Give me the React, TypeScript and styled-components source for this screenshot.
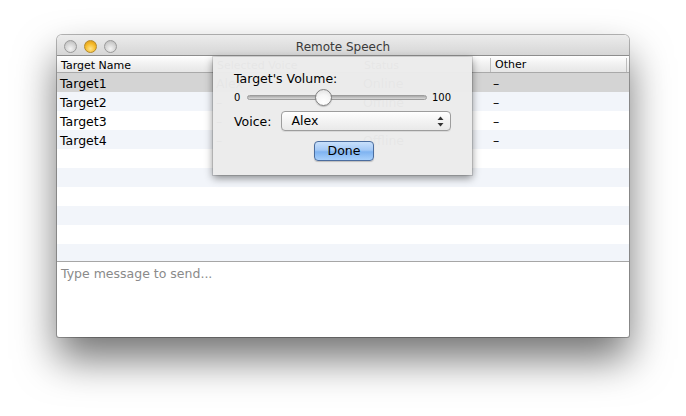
import React from "react";
import styled, { createGlobalStyle } from "styled-components";

const Global = createGlobalStyle`
  html, body { margin: 0; padding: 0; background: #ffffff; }
  body { font-family: "DejaVu Sans", "Liberation Sans", sans-serif; color: #000; }
  * { box-sizing: border-box; }
`;

const Page = styled.div`
  width: 686px;
  height: 416px;
  padding: 35px 0 0 57px;
  overflow: hidden;
`;

const Window = styled.div`
  position: relative;
  width: 572px;
  height: 302px;
  display: flex;
  flex-direction: column;
  border-radius: 5px 5px 2px 2px;
  background: #fff;
  box-shadow: 0 0 0 1px rgba(0, 0, 0, 0.28), 0 22px 40px rgba(0, 0, 0, 0.55);
`;

const TitleBar = styled.div`
  height: 21px;
  flex: none;
  position: relative;
  display: flex;
  align-items: center;
  justify-content: center;
  padding-top: 3px;
  border-radius: 5px 5px 0 0;
  background: linear-gradient(#ececec, #d6d6d6);
  border-bottom: 1px solid #8d8d8d;
  font-size: 12px;
  color: #3a3a3a;
`;

const Lights = styled.div`
  position: absolute;
  left: 7px;
  top: 5px;
  display: flex;
  gap: 7px;
`;

const Light = styled.div<{ $c?: "yellow" }>`
  width: 13px;
  height: 13px;
  border-radius: 50%;
  border: 1px solid ${(p) => (p.$c ? "#b48a2a" : "#9a9a9a")};
  background: ${(p) =>
    p.$c
      ? "radial-gradient(circle at 50% 70%, #ffe48a 0%, #f5b928 55%, #d4901a 100%)"
      : "radial-gradient(circle at 50% 70%, #f4f4f4 0%, #d0d0d0 60%, #b4b4b4 100%)"};
`;

const Table = styled.div`
  flex: 1;
  display: flex;
  flex-direction: column;
  overflow: hidden;
`;

const cols = "156px 147px 130px 136px 3px";

const Header = styled.div`
  height: 17px;
  flex: none;
  display: grid;
  grid-template-columns: ${cols};
  background: linear-gradient(#ffffff, #f1f1f1 50%, #e6e6e6);
  border-bottom: 1px solid #a9a9a9;
  font-size: 11px;
`;

const HeadCell = styled.div<{ $sep?: boolean }>`
  padding-left: 4px;
  white-space: nowrap;
  border-left: ${(p) => (p.$sep ? "1px solid #bdbdbd" : "none")};
  margin: ${(p) => (p.$sep ? "2px 0" : "0")};
  padding-top: ${(p) => (p.$sep ? "0" : "2px")};
  line-height: ${(p) => (p.$sep ? "14px" : "15px")};
`;

const Row = styled.div<{ $bg: string }>`
  height: 19px;
  flex: none;
  display: grid;
  grid-template-columns: ${cols};
  background: ${(p) => p.$bg};
  font-size: 12.5px;
  line-height: 19px;
  padding-top: 1px;
`;

const Cell = styled.div`
  padding-left: 3px;
  white-space: nowrap;
`;

const Message = styled.div`
  height: 76px;
  flex: none;
  border-top: 1px solid #a6a6a6;
  padding: 4px 4px;
  font-size: 12.5px;
  color: #8a8a8a;
  border-radius: 0 0 2px 2px;
`;

const Popover = styled.div`
  position: absolute;
  left: 156px;
  top: 22px;
  width: 259px;
  height: 118px;
  background: rgba(236, 236, 236, 0.975);
  box-shadow: 0 0 0 1px rgba(0, 0, 0, 0.12), 0 3px 8px rgba(0, 0, 0, 0.45);
  padding: 14px 21px 0 21px;
  display: flex;
  flex-direction: column;
  font-size: 12.5px;
`;

const Label = styled.div`
  height: 16px;
  line-height: 16px;
`;

const SliderRow = styled.div`
  margin-top: 1px;
  height: 18px;
  display: flex;
  align-items: center;
  font-size: 10px;
  gap: 5px;
`;

const Track = styled.div`
  position: relative;
  width: 181px;
  height: 5px;
  border-radius: 3px;
  border: 1px solid #9c9c9c;
  background: linear-gradient(#a8a8a8, #dadada);
  margin-left: 2px;
`;

const Knob = styled.div`
  position: absolute;
  left: 67px;
  top: -7px;
  width: 17px;
  height: 17px;
  border-radius: 50%;
  border: 1px solid #808080;
  background: radial-gradient(circle at 50% 80%, #ffffff 0%, #f6f6f6 50%, #dcdcdc 100%);
  box-shadow: 0 1px 1px rgba(0, 0, 0, 0.2);
`;

const VoiceRow = styled.div`
  margin-top: 5px;
  height: 20px;
  display: flex;
  align-items: center;
  gap: 10px;
`;

const Popup = styled.div`
  position: relative;
  width: 170px;
  height: 20px;
  border: 1px solid #9d9d9d;
  border-radius: 4px;
  background: linear-gradient(#ffffff, #f3f3f3 50%, #e9e9e9);
  box-shadow: 0 1px 0 rgba(0, 0, 0, 0.08);
  padding-left: 9px;
  line-height: 18px;
`;

const Arrows = styled.svg`
  position: absolute;
  right: 6px;
  top: 4px;
`;

const DoneRow = styled.div`
  margin-top: 10px;
  display: flex;
  justify-content: center;
`;

const Done = styled.div`
  width: 60px;
  height: 20px;
  margin-left: 3px;
  border: 1px solid #4b6d9e;
  border-radius: 4px;
  text-align: center;
  line-height: 18px;
  background: linear-gradient(#c9e0fb 0%, #a4c9f6 45%, #7fb3f1 55%, #a8d0fb 100%);
  box-shadow: 0 1px 1px rgba(0, 0, 0, 0.2);
`;

const rows = [
  { bg: "#d4d4d4", c: ["Target1", "Alex", "Online", "–"] },
  { bg: "#f2f5fa", c: ["Target2", "–", "Offline", "–"] },
  { bg: "#ffffff", c: ["Target3", "–", "Offline", "–"] },
  { bg: "#f2f5fa", c: ["Target4", "–", "Offline", "–"] },
  { bg: "#ffffff", c: ["", "", "", ""] },
  { bg: "#f2f5fa", c: ["", "", "", ""] },
  { bg: "#ffffff", c: ["", "", "", ""] },
  { bg: "#f2f5fa", c: ["", "", "", ""] },
  { bg: "#ffffff", c: ["", "", "", ""] },
  { bg: "#f2f5fa", c: ["", "", "", ""] },
];

export default function App() {
  return (
    <Page>
      <Global />
      <Window>
        <TitleBar>
          <Lights>
            <Light />
            <Light $c="yellow" />
            <Light />
          </Lights>
          Remote Speech
        </TitleBar>
        <Table>
          <Header>
            <HeadCell>Target Name</HeadCell>
            <HeadCell>Selected Voice</HeadCell>
            <HeadCell>Status</HeadCell>
            <HeadCell $sep>Other</HeadCell>
            <HeadCell $sep />
          </Header>
          {rows.map((r, i) => (
            <Row key={i} $bg={r.bg}>
              {r.c.map((t, j) => (
                <Cell key={j}>{t}</Cell>
              ))}
              <Cell />
            </Row>
          ))}
        </Table>
        <Message>Type message to send...</Message>
        <Popover>
          <Label>Target's Volume:</Label>
          <SliderRow>
            <span>0</span>
            <Track>
              <Knob />
            </Track>
            <span>100</span>
          </SliderRow>
          <VoiceRow>
            <span>Voice:</span>
            <Popup>
              Alex
              <Arrows width="7" height="11" viewBox="0 0 7 11">
                <path d="M3.5 0.5 L6.5 4 L0.5 4 Z" fill="#333" />
                <path d="M3.5 10.5 L6.5 7 L0.5 7 Z" fill="#333" />
              </Arrows>
            </Popup>
          </VoiceRow>
          <DoneRow>
            <Done>Done</Done>
          </DoneRow>
        </Popover>
      </Window>
    </Page>
  );
}
